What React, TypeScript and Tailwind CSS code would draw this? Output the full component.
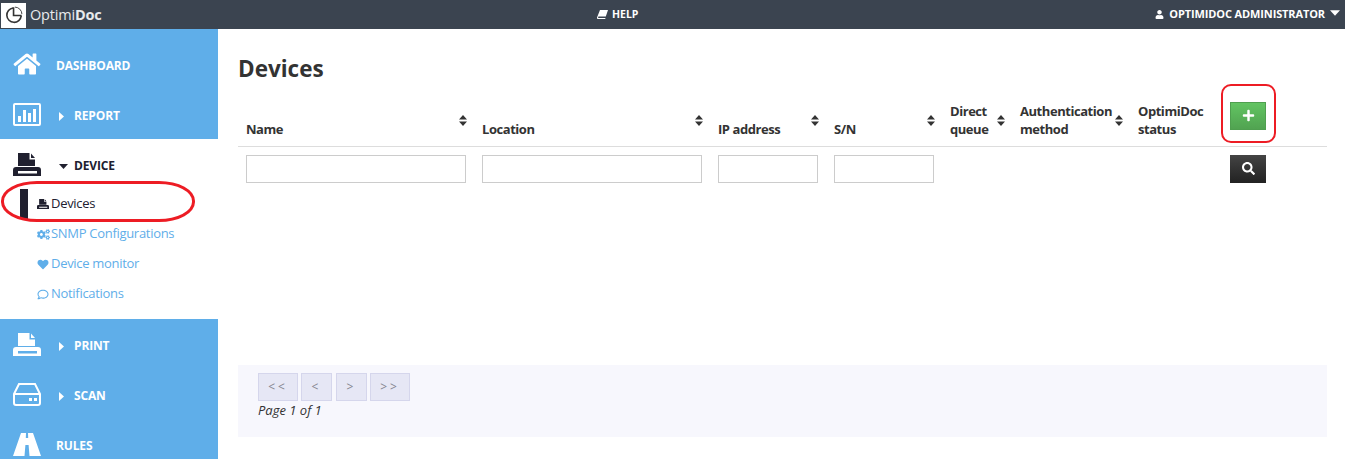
import React from "react";
import { FaHome, FaCogs, FaHeart, FaRegComment, FaUser, FaSearch, FaPlus } from "react-icons/fa";

const PrinterIcon = ({ className }: { className?: string }) => (
  <svg viewBox="0 0 28 23" className={className} fill="currentColor">
    <path d="M5 0h11.5v6.5H22V13H5z" />
    <path d="M18 0.5L22 5h-4z" />
    <path d="M3 14h22a3 3 0 0 1 3 3v6H0v-6a3 3 0 0 1 3-3zM5 18v2.5h19V18z" fillRule="evenodd" />
  </svg>
);

const ChartIcon = () => (
  <svg viewBox="0 0 28 23" className="w-7 h-[23px] text-white">
    <rect x="1" y="1" width="26" height="21" rx="1" fill="none" stroke="currentColor" strokeWidth="2" />
    <rect x="5" y="13" width="3" height="6" fill="currentColor" />
    <rect x="10" y="7" width="3" height="12" fill="currentColor" />
    <rect x="15" y="10" width="3" height="9" fill="currentColor" />
    <rect x="20" y="6" width="3" height="13" fill="currentColor" />
  </svg>
);

const ScanIcon = () => (
  <svg viewBox="0 0 28 23" className="w-7 h-[23px] text-white" fill="none" stroke="currentColor" strokeWidth="2">
    <path d="M6 1h16l5 10v9a2 2 0 0 1-2 2H3a2 2 0 0 1-2-2v-9z" />
    <path d="M1 11h26" />
    <rect x="16" y="15" width="3" height="3" fill="currentColor" stroke="none" />
    <rect x="21" y="15" width="3" height="3" fill="currentColor" stroke="none" />
  </svg>
);

const RoadIcon = () => (
  <svg viewBox="0 0 28 23" className="w-7 h-[23px] text-white" fill="currentColor">
    <path fillRule="evenodd" d="M8 0h5l-.2 5h2.4L15 0h5l8 23H16.5l-.9-11h-3.2l-.9 11H0z" />
  </svg>
);

const BookIcon = () => (
  <svg viewBox="0 0 11 9" className="w-[11px] h-[9px]" fill="currentColor">
    <path d="M3 0h8L8.8 6.5H1.5a1 1 0 0 0 0 1.5h7l-.3 1H1.2A1.2 1.2 0 0 1 0 7.5z" />
  </svg>
);

const RightCaret = () => (
  <svg viewBox="0 0 5 9" className="w-[5px] h-[9px] ml-[3px] mr-[10px]" fill="currentColor">
    <path d="M0 0l5 4.5L0 9z" />
  </svg>
);

const DownCaret = ({ className }: { className: string }) => (
  <svg viewBox="0 0 9 5" className={className} fill="currentColor">
    <path d="M0 0h9L4.5 5z" />
  </svg>
);

const Sort = ({ className }: { className?: string }) => (
  <svg viewBox="0 0 8 11" className={`absolute w-2 h-[11px] text-[#333] ${className ?? ""}`} fill="currentColor">
    <path d="M4 0l4 4.5H0zM4 11L0 6.5h8z" />
  </svg>
);

const MainItem = ({
  icon,
  label,
  caret,
  down,
  dark,
  top,
}: {
  icon: React.ReactNode;
  label: string;
  caret?: boolean;
  down?: boolean;
  dark?: boolean;
  top?: boolean;
}) => (
  <div
    className={`h-[50px] flex items-center pl-[13px] font-bold text-[12px] tracking-[-0.15px] ${top ? "pt-1" : ""} ${dark ? "text-[#20202f]" : "text-white"}`}
  >
    <span className="w-[43px] h-[26px] -mt-1 flex items-center shrink-0">{icon}</span>
    {caret && (down ? <DownCaret className="w-[9px] h-[5px] ml-[3px] mr-[6px]" /> : <RightCaret />)}
    <span>{label}</span>
  </div>
);

const SubItem = ({ icon, label, active }: { icon: React.ReactNode; label: string; active?: boolean }) => (
  <div className={`h-[30px] flex items-center pl-[37px] text-[13px] tracking-[-0.3px] ${active ? "text-[#20202f]" : "text-[#5faee9]"}`}>
    <span className="w-[14px] flex shrink-0">{icon}</span>
    <span>{label}</span>
  </div>
);

const Th = ({ w, lines, sort = true }: { w: string; lines: string[]; sort?: boolean }) => (
  <th className={`${w} relative p-0 pb-[8px] pl-2 align-bottom text-left font-bold text-[13px] tracking-[-0.45px] leading-[18px] text-[#333]`}>
    {lines.map((l) => (
      <div key={l}>{l}</div>
    ))}
    {sort && <Sort className="right-[7px] top-[15px]" />}
  </th>
);

const PageBtn = ({ w, children }: { w: string; children: string }) => (
  <button className={`${w} h-7 bg-[#e6e7f5] border border-[#d5d6ec] text-[12px] text-[#85858f] tracking-[3px]`}>{children}</button>
);

const Field = ({ w }: { w: string }) => (
  <td className="p-0 pl-2 pt-2">
    <div className={`${w} h-7 border border-[#ccc] bg-white`} />
  </td>
);

export default function App() {
  return (
    <div className="w-[1345px] h-[459px] overflow-hidden relative bg-white font-['Open_Sans','Noto_Sans',sans-serif] flex flex-col">
      <header className="h-[29px] shrink-0 bg-[#3b4450] text-white flex items-center relative">
        <div className="w-[25px] h-[25px] ml-[1px] mt-[1px] bg-white flex items-center justify-center">
          <svg viewBox="0 0 20 20" className="w-[18px] h-[18px]" fill="none" stroke="#333" strokeWidth="1.8">
            <path d="M9 2.2A8 8 0 1 0 18 11" />
            <path d="M9.5 1.5V10.5H18.5" />
            <path d="M11 1.2A8 8 0 0 1 18.8 9" strokeWidth="1" />
          </svg>
        </div>
        <span className="ml-[4px] text-[14.5px] tracking-[-0.2px] text-[#e8eaec]">
          Optimi<b className="font-bold">Doc</b>
        </span>
        <div className="absolute left-[597px] top-0 h-full flex items-center gap-[4px] text-[10.5px] font-bold">
          <BookIcon />
          <span>HELP</span>
        </div>
        <div className="ml-auto flex items-center pr-[5px] text-[11px] tracking-[-0.12px] font-bold">
          <FaUser className="w-[9px] h-[9px] mr-[5px]" />
          <span>OPTIMIDOC ADMINISTRATOR</span>
          <DownCaret className="w-[10px] h-[6px] ml-[5px] -mt-[3px]" />
        </div>
      </header>

      <div className="flex flex-1 min-h-0">
        <aside className="w-[218px] shrink-0 flex flex-col overflow-hidden">
          <div className="bg-[#5faee9] h-[110px] shrink-0 pt-[10px]">
            <MainItem icon={<FaHome className="w-7 h-[24px] text-white" />} label="DASHBOARD" top />
            <MainItem icon={<ChartIcon />} label="REPORT" caret top />
          </div>
          <div className="h-[180px] shrink-0 relative">
            <MainItem icon={<PrinterIcon className="w-7 h-[23px] text-[#20202f]" />} label="DEVICE" caret down dark top />
            <div className="absolute left-[20px] top-[50px] w-2 h-[30px] bg-[#20202f]" />
            <SubItem icon={<PrinterIcon className="w-[12px] h-[10px]" />} label="Devices" active />
            <SubItem icon={<FaCogs className="w-[13px] h-[11px]" />} label="SNMP Configurations" />
            <SubItem icon={<FaHeart className="w-[12px] h-[11px]" />} label="Device monitor" />
            <SubItem icon={<FaRegComment className="w-[12px] h-[11px]" />} label="Notifications" />
          </div>
          <div className="bg-[#5faee9] flex-1">
            <MainItem icon={<PrinterIcon className="w-7 h-[23px] text-white" />} label="PRINT" caret top />
            <MainItem icon={<ScanIcon />} label="SCAN" caret top />
            <MainItem icon={<RoadIcon />} label="RULES" top />
          </div>
        </aside>

        <main className="flex-1 min-w-0 pl-5 pr-[18px] flex flex-col">
          <h1 className="mt-[25px] h-[46px] text-[22.5px] font-bold leading-[30px] text-[#333]">Devices</h1>
          <table className="w-[1089px] table-fixed border-collapse">
            <thead>
              <tr className="h-[46px] border-b border-[#ddd]">
                <Th w="w-[236px]" lines={["Name"]} />
                <Th w="w-[236px]" lines={["Location"]} />
                <Th w="w-[116px]" lines={["IP address"]} />
                <Th w="w-[116px]" lines={["S/N"]} />
                <Th w="w-[70px]" lines={["Direct", "queue"]} />
                <Th w="w-[118px]" lines={["Authentication", "method"]} />
                <Th w="w-[92px]" lines={["OptimiDoc", "status"]} sort={false} />
                <th className="w-[105px] p-0 pl-2 pb-[16px] align-bottom text-left">
                  <button className="w-9 h-7 flex items-center justify-center bg-gradient-to-b from-[#62c462] to-[#51a351] border border-[#4f9f4f] text-white">
                    <FaPlus className="w-[13px] h-[13px]" />
                  </button>
                </th>
              </tr>
            </thead>
            <tbody>
              <tr>
                <Field w="w-[220px]" />
                <Field w="w-[220px]" />
                <Field w="w-[100px]" />
                <Field w="w-[100px]" />
                <td />
                <td />
                <td />
                <td className="p-0 pl-2 pt-2">
                  <button className="w-9 h-7 flex items-center justify-center bg-gradient-to-b from-[#444] to-[#222] text-white">
                    <FaSearch className="w-[13px] h-[13px]" />
                  </button>
                </td>
              </tr>
            </tbody>
          </table>
          <div className="mt-[182px] w-[1089px] h-[72px] bg-[#f7f7fd] pl-5 pt-2">
            <div className="flex gap-[3px]">
              <PageBtn w="w-10">{"<<"}</PageBtn>
              <PageBtn w="w-[31px]">{"<"}</PageBtn>
              <PageBtn w="w-[31px] ml-[1px]">{">"}</PageBtn>
              <PageBtn w="w-10">{">>"}</PageBtn>
            </div>
            <div className="text-[13px] italic text-[#333] leading-[18px]">Page 1 of 1</div>
          </div>
        </main>
      </div>

      <div className="absolute left-[1px] top-[181px] w-[194px] h-[41px] border-[3px] border-[#ed1c24] rounded-[36px/20px] pointer-events-none" />
      <div className="absolute left-[1221px] top-[84px] w-[55px] h-[59px] border-[2px] border-[#ed1c24] rounded-[10px] pointer-events-none" />
    </div>
  );
}
